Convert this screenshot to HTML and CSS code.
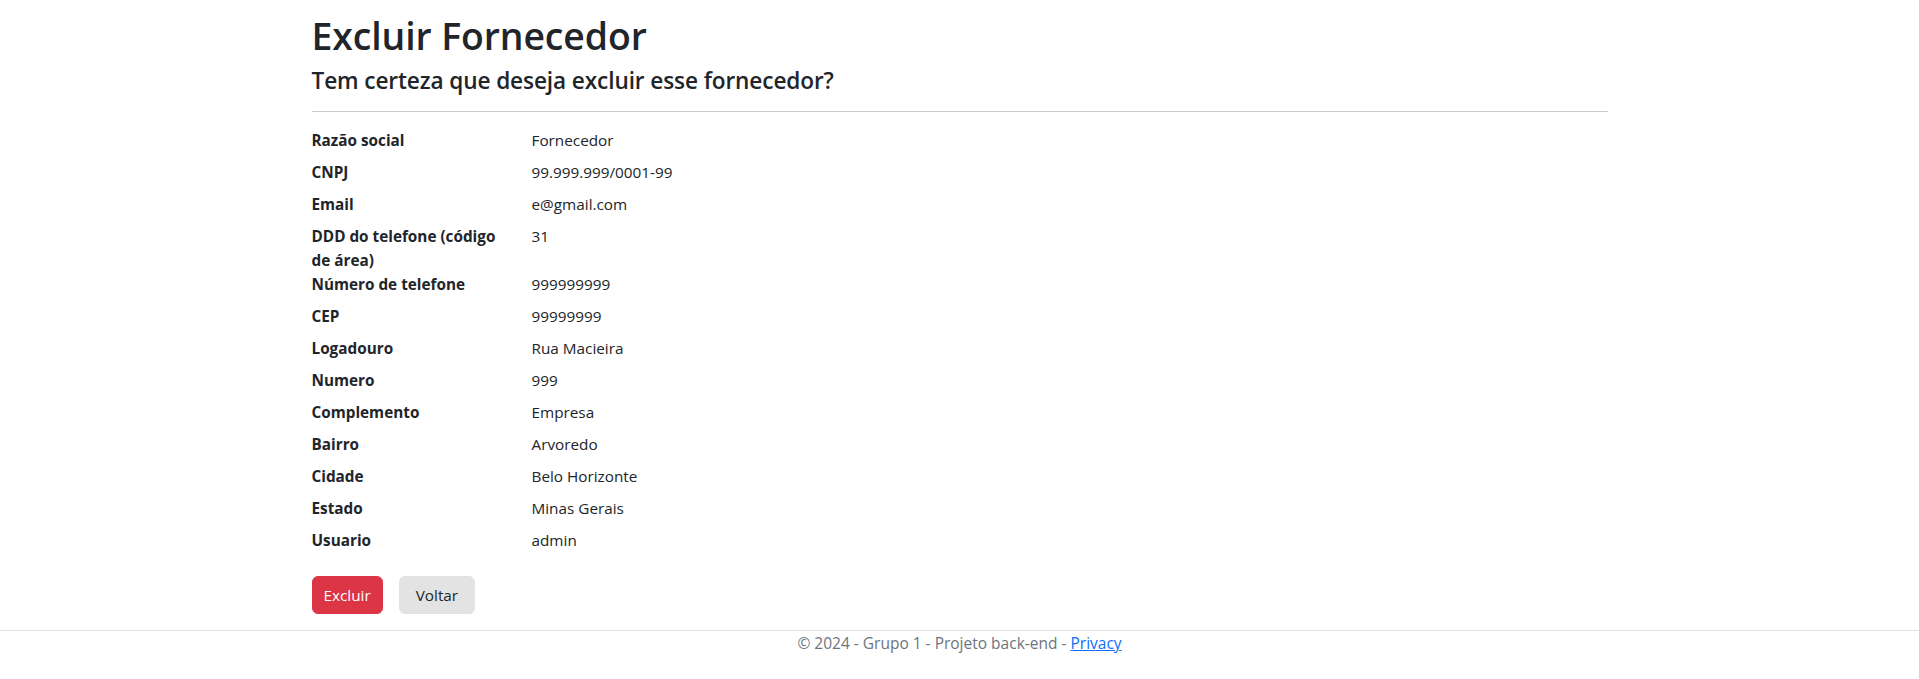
FILE: index.html
```html
<!DOCTYPE html>
<html lang="pt-br">
<head>
<meta charset="utf-8">
<title>Excluir Fornecedor</title>
<link rel="stylesheet" href="styles.css">
</head>
<body>
<main class="container">
  <h1 class="title">Excluir Fornecedor</h1>
  <h4 class="subtitle">Tem certeza que deseja excluir esse fornecedor?</h4>
  <hr class="divider">
  <dl class="details">
    <dt>Razão social</dt><dd>Fornecedor</dd>
    <dt>CNPJ</dt><dd>99.999.999/0001-99</dd>
    <dt>Email</dt><dd>e@gmail.com</dd>
    <dt>DDD do telefone (código de área)</dt><dd>31</dd>
    <dt>Número de telefone</dt><dd>999999999</dd>
    <dt>CEP</dt><dd>99999999</dd>
    <dt>Logadouro</dt><dd>Rua Macieira</dd>
    <dt>Numero</dt><dd>999</dd>
    <dt>Complemento</dt><dd>Empresa</dd>
    <dt>Bairro</dt><dd>Arvoredo</dd>
    <dt>Cidade</dt><dd>Belo Horizonte</dd>
    <dt>Estado</dt><dd>Minas Gerais</dd>
    <dt>Usuario</dt><dd>admin</dd>
  </dl>
  <form class="actions">
    <button type="button" class="btn btn-danger">Excluir</button>
    <a class="btn btn-back" href="#">Voltar</a>
  </form>
</main>
<footer class="footer">
  <div class="footer-inner">© 2024 - Grupo 1 - Projeto back-end - <a href="#" class="footer-link">Privacy</a></div>
</footer>
</body>
</html>
```
FILE: styles.css
```css
html, body {
  margin: 0;
  padding: 0;
}
body {
  font-family: "Open Sans", "Noto Sans", sans-serif;
  font-size: 15.3px;
  line-height: 24px;
  color: #212529;
  background: #fff;
}
.container {
  width: 1296px;
  margin: 0 auto;
  padding: 13px 12px 0;
}
.title {
  margin: 0;
  font-size: 37.4px;
  line-height: 46px;
  font-weight: 600;
  letter-spacing: -0.1px;
}
.subtitle {
  margin: 8px 0 0;
  font-size: 22.6px;
  line-height: 28px;
  font-weight: 600;
  letter-spacing: -0.1px;
}
.divider {
  margin: 16px 0;
  border: 0;
  border-top: 1px solid #c8c9ca;
  height: 0;
}
.details {
  display: grid;
  grid-template-columns: 196px 1fr;
  column-gap: 24px;
  margin: 0 0 16px;
}
.details dt {
  font-weight: 700;
  margin: 0;
}
.details dd {
  margin: 0 0 8px;
}
.actions {
  display: flex;
  gap: 16px;
  margin: 0;
}
.btn {
  display: inline-block;
  box-sizing: border-box;
  height: 38px;
  padding: 6px 12px;
  border: 1px solid transparent;
  border-radius: 6px;
  font-family: inherit;
  font-size: 15.3px;
  line-height: 24px;
  text-decoration: none;
  cursor: pointer;
}
.btn-danger {
  background: #dc3545;
  border-color: #dc3545;
  color: #fff;
  padding: 6px 11px;
}
.btn-back {
  background: #e3e3e3;
  border-color: #e3e3e3;
  color: #212529;
  padding: 6px 16px;
}
.footer {
  margin-top: 16px;
  border-top: 1px solid #dee2e6;
  color: #6c757d;
}
.footer-inner {
  text-align: center;
  line-height: 24px;
  font-size: 15.5px;
}
.footer-link {
  color: #0d6efd;
  text-decoration: underline;
}
```
